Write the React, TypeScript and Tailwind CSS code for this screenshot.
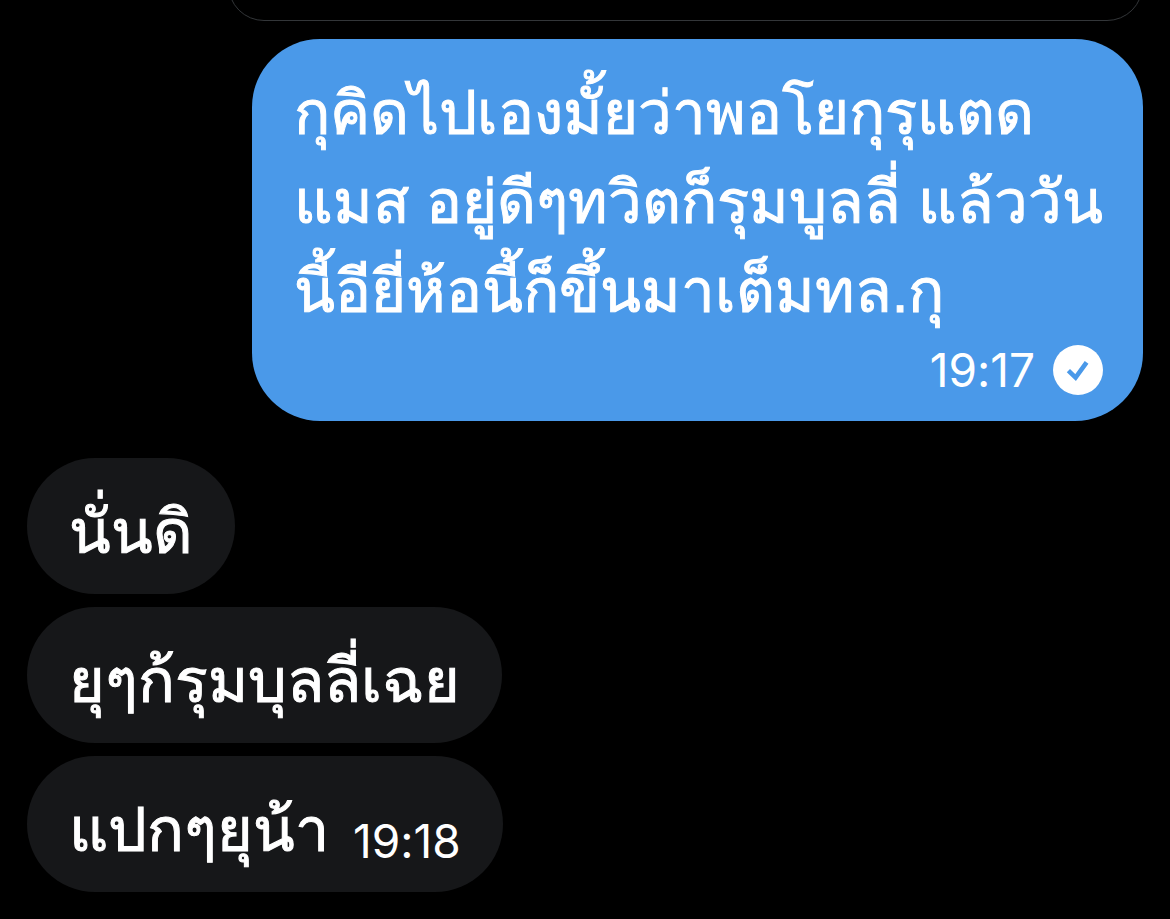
import type { ReactNode } from "react";

function Time({ value }: { value: string }) {
  return (
    <time
      dateTime={value}
      className="font-['Inter',sans-serif] text-[46px] leading-[50px] [font-feature-settings:'calt'_0]"
    >
      {value}
    </time>
  );
}

function SentBadge() {
  return (
    <svg viewBox="0 0 50 50" className="size-[50px]" role="img" aria-label="Sent">
      <circle cx="25" cy="25" r="25" fill="#fff" />
      <path d="M15.4 25.6 L22.6 32.6 L33.6 17.4" fill="none" stroke="#4a99e9" strokeWidth="4.6" />
    </svg>
  );
}

function Received({ children, time }: { children: ReactNode; time?: string }) {
  return (
    <li className="flex max-w-full items-start rounded-[68px] bg-[#161719] px-[42px] pt-[30px] pb-[17px]">
      <p className="text-[61px] leading-[89px] [-webkit-text-stroke:1px_white]">{children}</p>
      {time && (
        <div className="ml-6 flex pt-[30px]">
          <Time value={time} />
        </div>
      )}
    </li>
  );
}

export default function App() {
  return (
    <main className="flex min-h-screen flex-col bg-black px-[27px] font-['Liberation_Sans',sans-serif] text-white">
      <div className="flex h-[21px] items-end overflow-hidden pl-[201px]">
        <div className="h-24 w-full shrink-0 rounded-[36px] border border-[#333639]" />
      </div>

      <article className="mt-[18px] ml-auto rounded-[68px] bg-[#4a99e9] pt-[30px] pr-[40px] pb-[26px] pl-[42px]">
        <p className="text-[60px] leading-[89px] [-webkit-text-stroke:1px_white]">
          กุคิดไปเองมั้ยว่าพอโยกุรุแตด
          <br />
          แมส อยู่ดีๆทวิตก็รุมบูลลี่ แล้ววัน
          <br />
          นี้อียี่ห้อนี้ก็ขึ้นมาเต็มทล.กุ
        </p>
        <div className="mt-[9px] flex items-center justify-end gap-[18px]">
          <Time value="19:17" />
          <SentBadge />
        </div>
      </article>

      <ul className="mt-[37px] flex flex-col items-start gap-[13px]">
        <Received>นั่นดิ</Received>
        <Received>ยุๆก้รุมบุลลี่เฉย</Received>
        <Received time="19:18">แปกๆยุน้า</Received>
      </ul>
    </main>
  );
}
